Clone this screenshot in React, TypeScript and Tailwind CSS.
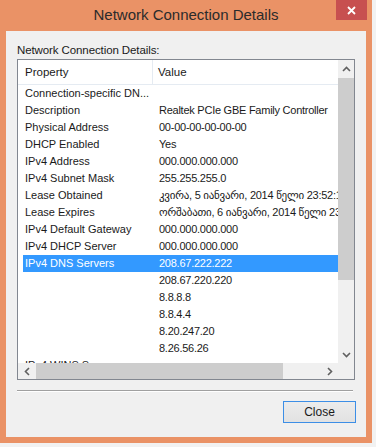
const rows: [string, string][] = [
  ['Connection-specific DN...', ''],
  ['Description', 'Realtek PCIe GBE Family Controller'],
  ['Physical Address', '00-00-00-00-00-00'],
  ['DHCP Enabled', 'Yes'],
  ['IPv4 Address', '000.000.000.000'],
  ['IPv4 Subnet Mask', '255.255.255.0'],
  ['Lease Obtained', 'კვირა, 5 იანვარი, 2014 წელი 23:52:14'],
  ['Lease Expires', 'ორშაბათი, 6 იანვარი, 2014 წელი 23:52:14'],
  ['IPv4 Default Gateway', '000.000.000.000'],
  ['IPv4 DHCP Server', '000.000.000.000'],
  ['IPv4 DNS Servers', '208.67.222.222'],
  ['', '208.67.220.220'],
  ['', '8.8.8.8'],
  ['', '8.8.4.4'],
  ['', '8.20.247.20'],
  ['', '8.26.56.26'],
  ['IPv4 WINS Server', ''],
]

const SELECTED = 10

function Caret({ dir }: { dir: 'up' | 'down' | 'left' | 'right' }) {
  const pts = {
    up: '1,5 4.5,1.5 8,5',
    down: '1,2 4.5,5.5 8,2',
    left: '5,1 1.5,4.5 5,8',
    right: '2,1 5.5,4.5 2,8',
  }[dir]
  const vertical = dir === 'up' || dir === 'down'
  return (
    <svg width={vertical ? 9 : 7} height={vertical ? 7 : 9} viewBox={vertical ? '0 0 9 7' : '0 0 7 9'}>
      <polyline points={pts} fill="none" stroke="#606060" strokeWidth="1.6" />
    </svg>
  )
}

export default function App() {
  return (
    <div
      className="w-[376px] h-[447px] bg-[#f2f2f2] overflow-hidden text-[#1a1a1a]"
      style={{ fontFamily: '"Liberation Sans", "DejaVu Sans", sans-serif' }}
    >
      {/* window frame */}
      <div className="w-[372px] h-[443px] bg-[#ea9266] flex flex-col">
        {/* title bar */}
        <div className="relative h-[31px] flex items-center justify-center">
          <span className="text-[15px] text-[#2b2b2b] mt-[-1px]">Network Connection Details</span>
          <div className="absolute top-0 right-[5px] w-[31px] h-[20px] bg-[#c75050] flex items-center justify-center">
            <svg width="9" height="9" viewBox="0 0 9 9">
              <path d="M1 1L8 8M8 1L1 8" stroke="#fff" strokeWidth="1.8" />
            </svg>
          </div>
        </div>

        {/* client area */}
        <div className="ml-[6px] w-[360px] h-[406px] bg-[#f0f0f0] flex flex-col pl-[11px]">
          <div className="h-[28px] pt-[12px] text-[11.5px] leading-[14px] tracking-[-0.1px]">Network Connection Details:</div>

          {/* list view */}
          <div className="w-[338px] h-[321px] border border-[#828790] flex flex-col bg-white">
            <div className="flex h-[303px]">
              <div className="w-[320px] h-[303px] overflow-hidden flex flex-col">
                <div className="flex h-[25px] shrink-0 border-b border-[#e5ebf2] text-[11.5px]">
                  <div className="w-[135px] border-r border-[#e5ebf2] pl-[7px] leading-[24px]">Property</div>
                  <div className="pl-[5px] leading-[24px]">Value</div>
                </div>
                {rows.map(([k, v], i) => (
                  <div
                    key={i}
                    className={
                      'flex h-[17px] shrink-0 ml-[5px] text-[11px] leading-[17px] whitespace-nowrap ' +
                      (i === SELECTED ? 'bg-[#3399ff] text-white' : '')
                    }
                  >
                    <div className="w-[130px] shrink-0 pl-[2px]">{k}</div>
                    <div className="pl-[6px] tracking-[-0.25px]">{v}</div>
                  </div>
                ))}
              </div>
              {/* vertical scrollbar */}
              <div className="w-[16px] h-[303px] bg-[#f0f0f0] flex flex-col items-center">
                <div className="h-[18px] flex items-center justify-center">
                  <Caret dir="up" />
                </div>
                <div className="w-[16px] h-[202px] bg-[#cdcdcd]" />
                <div className="flex-1" />
                <div className="h-[17px] flex items-center justify-center">
                  <Caret dir="down" />
                </div>
              </div>
            </div>
            {/* horizontal scrollbar */}
            <div className="flex h-[16px]">
              <div className="w-[320px] bg-[#f0f0f0] flex items-center">
                <div className="w-[18px] flex justify-center">
                  <Caret dir="left" />
                </div>
                <div className="w-[247px] h-[16px] bg-[#cdcdcd]" />
                <div className="flex-1" />
                <div className="w-[18px] flex justify-center">
                  <Caret dir="right" />
                </div>
              </div>
              <div className="w-[16px] bg-[#f0f0f0]" />
            </div>
          </div>

          {/* separator */}
          <div className="w-[336px] mt-[10px] border-t border-[#a0a0a0] border-b border-b-white" />

          {/* button */}
          <div className="w-[338px] flex justify-end mt-[9px]">
            <button className="w-[73px] h-[22px] mr-[-1px] border border-[#3c8ee6] bg-gradient-to-b from-[#ececec] to-[#e2e2e2] text-[12px] leading-[20px] text-[#1a1a1a]">
              Close
            </button>
          </div>
        </div>
      </div>
    </div>
  )
}
